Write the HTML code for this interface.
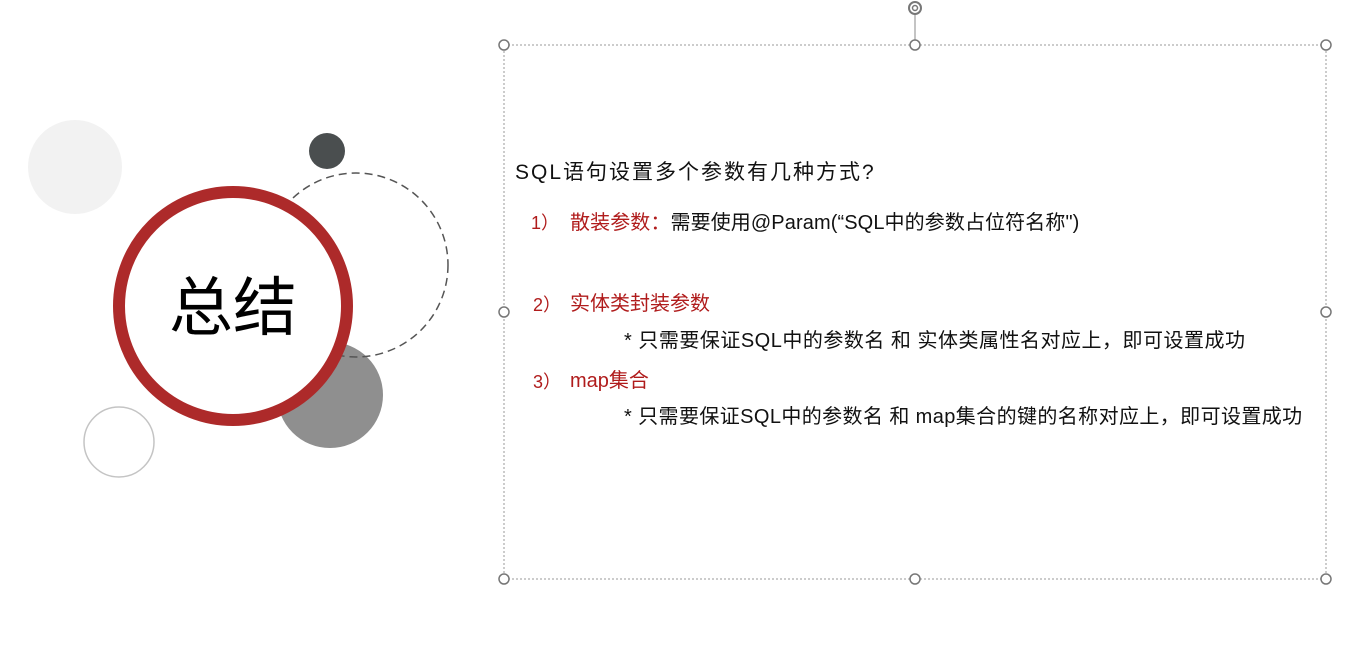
<!DOCTYPE html>
<html><head><meta charset="utf-8"><style>
body{margin:0;width:1365px;height:651px;background:#fff;overflow:hidden;position:relative;font-family:"Liberation Sans","Noto Sans CJK SC",sans-serif}
.t{position:absolute;white-space:nowrap;font-size:20px;color:#111;line-height:1}
.r{color:#b01c1c}
</style></head><body>
<svg width="1365" height="651" style="position:absolute;left:0;top:0">
<circle cx="75" cy="167" r="47" fill="#f2f2f2"/>
<circle cx="119" cy="442" r="35" fill="none" stroke="#c4c4c4" stroke-width="1.5"/>
<circle cx="330" cy="395" r="53" fill="#8f8f8f"/>
<circle cx="327" cy="151" r="18" fill="#4a4e4f"/>
<circle cx="356" cy="265" r="92" fill="none" stroke="#555" stroke-width="1.5" stroke-dasharray="8 5"/>
<circle cx="233" cy="306" r="114" fill="#fff" stroke="#ad2a2a" stroke-width="12"/>
<text x="233" y="330" text-anchor="middle" font-family="Noto Sans CJK SC,sans-serif" font-size="64" fill="#000">总结</text>
<rect x="504" y="45" width="822" height="534" fill="none" stroke="#999" stroke-width="1" stroke-dasharray="2 2"/>
<line x1="915" y1="14" x2="915" y2="45" stroke="#888" stroke-width="1"/>
<circle cx="915" cy="8" r="6" fill="none" stroke="#777" stroke-width="2"/>
<circle cx="915" cy="8" r="2.5" fill="none" stroke="#777" stroke-width="1.5"/>
<g fill="#fff" stroke="#777" stroke-width="1.5">
<circle cx="504" cy="45" r="5"/><circle cx="915" cy="45" r="5"/><circle cx="1326" cy="45" r="5"/>
<circle cx="504" cy="312" r="5"/><circle cx="1326" cy="312" r="5"/>
<circle cx="504" cy="579" r="5"/><circle cx="915" cy="579" r="5"/><circle cx="1326" cy="579" r="5"/>
</g>
</svg>
<div class="t" style="left:515px;top:162px;font-size:21px;letter-spacing:2px">SQL语句设置多个参数有几种方式?</div>
<div class="t r" style="left:531px;top:214px;font-size:18px">1）</div>
<div class="t" style="left:570px;top:213px;letter-spacing:0.1px"><span class="r">散装参数：</span>需要使用@Param(“SQL中的参数占位符名称")</div>
<div class="t r" style="left:533px;top:296px;font-size:18px">2）</div>
<div class="t r" style="left:570px;top:294px">实体类封装参数</div>
<div class="t" style="left:624px;top:331px;letter-spacing:0.5px">* 只需要保证SQL中的参数名 和 实体类属性名对应上，即可设置成功</div>
<div class="t r" style="left:533px;top:373px;font-size:18px">3）</div>
<div class="t r" style="left:570px;top:371px">map集合</div>
<div class="t" style="left:624px;top:407px;letter-spacing:0.4px">* 只需要保证SQL中的参数名 和 map集合的键的名称对应上，即可设置成功</div>
</body></html>
